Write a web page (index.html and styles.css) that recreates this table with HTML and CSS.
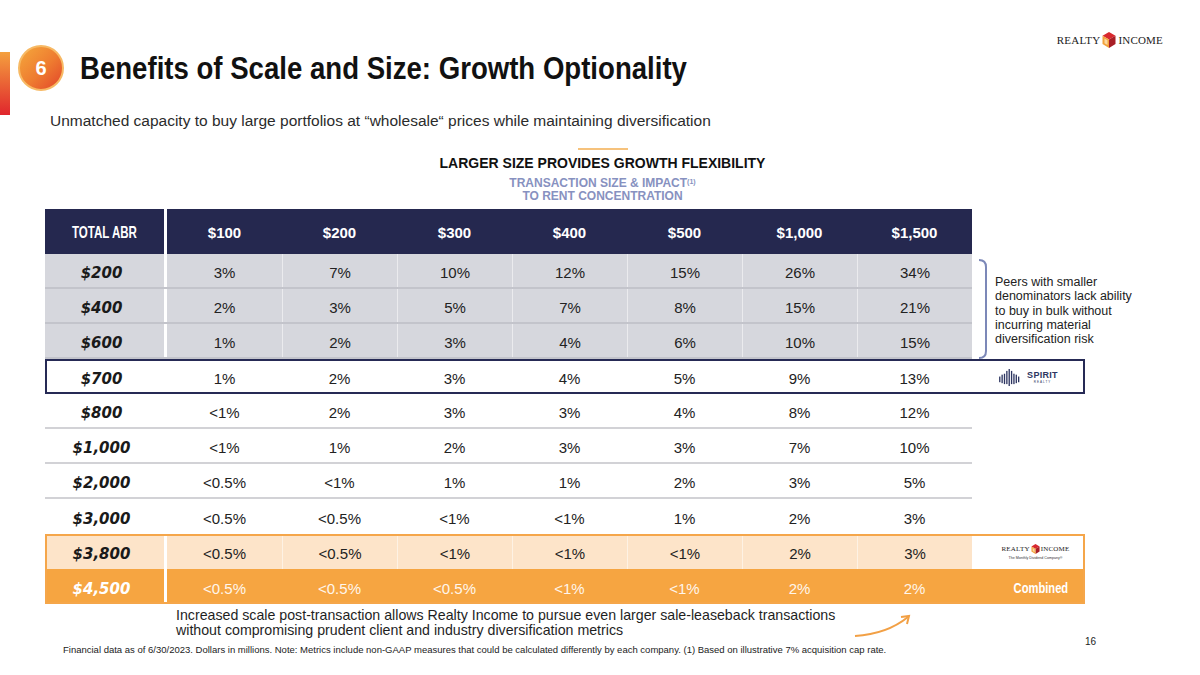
FILE: index.html
```html
<!DOCTYPE html>
<html lang="en">
<head>
<meta charset="utf-8">
<title>Benefits of Scale and Size</title>
<link rel="stylesheet" href="styles.css">
</head>
<body>
<div class="slide">
  <div class="topbar">
    <div class="ri-logo big">
      <span>REALTY</span>
      <svg class="cube" viewBox="0 0 14 16"><polygon points="7,0 13.5,3.8 7,7.6 0.5,3.8" fill="#d8282e"/><polygon points="13.5,3.8 13.5,12 7,16 7,7.6" fill="#a81e26"/><polygon points="0.5,3.8 7,7.6 7,16 0.5,12" fill="#f2a23c"/><polygon points="2.5,6.5 5.5,8.3 5.5,13 2.5,11.2" fill="#fbd9a0"/></svg>
      <span>INCOME</span>
    </div>
  </div>

  <div class="title-row">
    <div class="accent"></div>
    <div class="badge">6</div>
    <h1>Benefits of Scale and Size: Growth Optionality</h1>
  </div>

  <p class="subtitle">Unmatched capacity to buy large portfolios at “wholesale“ prices while maintaining diversification</p>

  <div class="section-head">
    <div class="rule"></div>
    <h2>LARGER SIZE PROVIDES GROWTH FLEXIBILITY</h2>
    <h3>TRANSACTION SIZE &amp; IMPACT<sup>(1)</sup><br>TO RENT CONCENTRATION</h3>
  </div>

  <div class="table">
    <div class="row head">
      <div class="cell label"><span class="cond">TOTAL ABR</span></div>
      <div class="cell">$100</div><div class="cell">$200</div><div class="cell">$300</div><div class="cell">$400</div><div class="cell">$500</div><div class="cell">$1,000</div><div class="cell">$1,500</div>
    </div>

    <div class="peers">
      <div class="rows">
        <div class="row gray">
          <div class="cell label">$200</div>
          <div class="cell">3%</div><div class="cell">7%</div><div class="cell">10%</div><div class="cell">12%</div><div class="cell">15%</div><div class="cell">26%</div><div class="cell">34%</div>
        </div>
        <div class="row gray">
          <div class="cell label">$400</div>
          <div class="cell">2%</div><div class="cell">3%</div><div class="cell">5%</div><div class="cell">7%</div><div class="cell">8%</div><div class="cell">15%</div><div class="cell">21%</div>
        </div>
        <div class="row gray">
          <div class="cell label">$600</div>
          <div class="cell">1%</div><div class="cell">2%</div><div class="cell">3%</div><div class="cell">4%</div><div class="cell">6%</div><div class="cell">10%</div><div class="cell">15%</div>
        </div>
      </div>
      <div class="note">
        <svg class="bracket" viewBox="0 0 12 100"><path d="M2,1 Q9,1 9,8 L9,92 Q9,99 2,99" fill="none" stroke="#7c88b8" stroke-width="2"/></svg>
        <p>Peers with smaller<br>denominators lack ability<br>to buy in bulk without<br>incurring material<br>diversification risk</p>
      </div>
    </div>

    <div class="row plain boxed spirit">
      <div class="cell label">$700</div>
      <div class="cell">1%</div><div class="cell">2%</div><div class="cell">3%</div><div class="cell">4%</div><div class="cell">5%</div><div class="cell">9%</div><div class="cell">13%</div>
      <div class="side">
        <div class="spirit-logo">
          <svg class="spirit-icon" viewBox="0 0 22 18">
            <g fill="#2d3561">
              <rect x="0" y="8" width="1.4" height="6"/>
              <rect x="2.5" y="6" width="1.4" height="9"/>
              <rect x="5" y="5" width="1.4" height="11"/>
              <rect x="7.5" y="2" width="1.4" height="14"/>
              <rect x="10" y="0" width="1.4" height="18"/>
              <rect x="12.5" y="2" width="1.4" height="14"/>
              <rect x="15" y="5" width="1.4" height="11"/>
              <rect x="17.5" y="6" width="1.4" height="9"/>
              <rect x="20" y="8" width="1.4" height="6"/>
            </g>
          </svg>
          <div class="spirit-text"><span class="s1">SPIRIT</span><span class="s2">REALTY</span></div>
        </div>
      </div>
    </div>

    <div class="row plain">
      <div class="cell label">$800</div>
      <div class="cell">&lt;1%</div><div class="cell">2%</div><div class="cell">3%</div><div class="cell">3%</div><div class="cell">4%</div><div class="cell">8%</div><div class="cell">12%</div>
    </div>
    <div class="row plain">
      <div class="cell label">$1,000</div>
      <div class="cell">&lt;1%</div><div class="cell">1%</div><div class="cell">2%</div><div class="cell">3%</div><div class="cell">3%</div><div class="cell">7%</div><div class="cell">10%</div>
    </div>
    <div class="row plain">
      <div class="cell label">$2,000</div>
      <div class="cell">&lt;0.5%</div><div class="cell">&lt;1%</div><div class="cell">1%</div><div class="cell">1%</div><div class="cell">2%</div><div class="cell">3%</div><div class="cell">5%</div>
    </div>
    <div class="row plain last">
      <div class="cell label">$3,000</div>
      <div class="cell">&lt;0.5%</div><div class="cell">&lt;0.5%</div><div class="cell">&lt;1%</div><div class="cell">&lt;1%</div><div class="cell">1%</div><div class="cell">2%</div><div class="cell">3%</div>
    </div>

    <div class="ri-box">
      <div class="row peach">
        <div class="cell label">$3,800</div>
        <div class="cell">&lt;0.5%</div><div class="cell">&lt;0.5%</div><div class="cell">&lt;1%</div><div class="cell">&lt;1%</div><div class="cell">&lt;1%</div><div class="cell">2%</div><div class="cell">3%</div>
        <div class="side white">
          <div class="ri-small">
            <div class="ri-logo small">
              <span>REALTY</span>
              <svg class="cube" viewBox="0 0 14 16"><polygon points="7,0 13.5,3.8 7,7.6 0.5,3.8" fill="#d8282e"/><polygon points="13.5,3.8 13.5,12 7,16 7,7.6" fill="#a81e26"/><polygon points="0.5,3.8 7,7.6 7,16 0.5,12" fill="#f2a23c"/><polygon points="2.5,6.5 5.5,8.3 5.5,13 2.5,11.2" fill="#fbd9a0"/></svg>
              <span>INCOME</span>
            </div>
            <div class="tagline">The Monthly Dividend Company®</div>
          </div>
        </div>
      </div>
      <div class="row orange">
        <div class="cell label">$4,500</div>
        <div class="cell">&lt;0.5%</div><div class="cell">&lt;0.5%</div><div class="cell">&lt;0.5%</div><div class="cell">&lt;1%</div><div class="cell">&lt;1%</div><div class="cell">2%</div><div class="cell">2%</div>
        <div class="side combined"><span class="cond">Combined</span></div>
      </div>
    </div>
  </div>

  <div class="bottom">
    <p class="callout">Increased scale post-transaction allows Realty Income to pursue even larger sale-leaseback transactions<br>without compromising prudent client and industry diversification metrics</p>
    <svg class="arrow" viewBox="0 0 60 26"><path d="M2,23 Q34,21 55,4" fill="none" stroke="#f2a045" stroke-width="2"/><path d="M48,4 L56,3 L54,11" fill="none" stroke="#f2a045" stroke-width="2"/></svg>
  </div>

  <div class="footer">
    <p class="footnote">Financial data as of 6/30/2023. Dollars in millions. Note: Metrics include non-GAAP measures that could be calculated differently by each company. (1) Based on illustrative 7% acquisition cap rate.</p>
    <span class="page">16</span>
  </div>
</div>
</body>
</html>
```

FILE: styles.css
```css
* { box-sizing: border-box; margin: 0; padding: 0; }
body { margin: 0; background: #fff; font-family: "Liberation Sans", Arial, sans-serif; color: #222; }
.slide { position: relative; width: 1200px; height: 675px; overflow: hidden; background: #fff; }

/* top logo */
.topbar { height: 45px; display: flex; justify-content: flex-end; align-items: flex-start; padding: 32px 37px 0 0; }
.ri-logo { display: flex; align-items: center; font-family: "Liberation Serif", "Times New Roman", serif; color: #1b1b1b; }
.ri-logo.big { font-size: 11px; letter-spacing: 0.2px; gap: 2px; }
.ri-logo.big .cube { width: 14px; height: 16px; }
.ri-logo.small { font-size: 7px; letter-spacing: 0.2px; gap: 1px; justify-content: center; }
.ri-logo.small .cube { width: 9px; height: 10px; }

/* title */
.title-row { height: 67px; display: flex; align-items: flex-start; }
.accent { width: 10px; height: 63px; margin-top: 7px; background: linear-gradient(#f4a03e, #e0262d); flex: none; }
.badge { width: 46px; height: 46px; margin-left: 8px; border-radius: 50%; flex: none;
  background: linear-gradient(135deg, #f5a83c 0%, #ee7b30 55%, #e2442a 100%);
  border: 2px solid #f7b964; display: flex; align-items: center; justify-content: center;
  color: #fff; font-weight: 700; font-size: 20px; }
h1 { margin-left: 16px; font-weight: 700; font-size: 32px; line-height: 46px; color: #111; white-space: nowrap;
  transform: scaleX(0.862); transform-origin: left center; }

.subtitle { margin-left: 50px; font-size: 15.5px; line-height: 18px; color: #2b2b2b; white-space: nowrap; }

/* section head */
.section-head { display: flex; flex-direction: column; align-items: center; padding-left: 5px; }
.rule { width: 50px; height: 2px; margin-top: 18px; background: #f6c27c; }
h2 { margin-top: 5px; font-size: 14px; line-height: 16px; font-weight: 700; color: #111; }
h3 { margin-top: 6px; font-size: 12px; line-height: 13px; font-weight: 700; color: #8791c0; text-align: center; }
h3 sup { font-size: 7px; vertical-align: top; position: relative; top: -2px; }

/* table */
.table { margin-left: 45px; margin-top: 6px; width: 1040px; }
.row { display: flex; height: 35px; width: 927px; }
.cell { width: 115px; flex: none; display: flex; align-items: center; justify-content: center; font-size: 15px; padding-top: 4px; color: #222; }
.cell.label { width: 122px; border-right: 3px solid #fff; padding-right: 6px;
  font-family: "DejaVu Sans", sans-serif; font-weight: 700; font-style: italic; font-size: 15px; color: #1a1a1a; }
.cond { display: inline-block; font-family: "Liberation Sans", Arial, sans-serif; font-style: normal; font-weight: 700; white-space: nowrap; transform: scaleX(0.76); }

.row.head { height: 45px; background: #25284f; }
.row.head .cell { color: #fff; font-weight: 700; padding-top: 2px; }
.row.head .cell.label { color: #fff; padding-right: 0; font-size: 16.5px; }
.row.head .cell.label .cond { transform: scaleX(0.7); }

.peers { display: flex; }
.rows { width: 927px; flex: none; }
.row.gray { background: #d6d7dd; border-bottom: 2px solid #c3c4cb; }
.row.gray .cell + .cell + .cell, .row.peach .cell + .cell + .cell { border-left: 1px solid rgba(255,255,255,0.5); }
.note { display: flex; align-items: flex-start; flex: none; width: 170px; }
.bracket { width: 12px; height: 100px; margin: 5px 0 0 5px; flex: none; }
.note p { margin: 21px 0 0 6px; font-size: 12.5px; line-height: 14.25px; color: #222; white-space: nowrap; }

.row.plain { border-bottom: 2px solid #d2d2d6; }
.row.plain.last { border-bottom: none; }
.row.boxed { width: 1040px; border-bottom: none; outline: 2px solid #262a55; outline-offset: -2px; }
.side { width: 113px; flex: none; display: flex; align-items: center; justify-content: center; }

.spirit-logo { display: flex; align-items: center; gap: 7px; padding-top: 2px; }
.spirit-icon { width: 21px; height: 17px; }
.spirit-text { display: flex; flex-direction: column; align-items: center; color: #2d3561; }
.spirit-text .s1 { font-size: 9px; font-weight: 700; letter-spacing: 0.3px; line-height: 9px; }
.spirit-text .s2 { font-size: 3px; letter-spacing: 1px; line-height: 5px; }

.ri-box { width: 1040px; outline: 2px solid #f5a64a; outline-offset: -2px; }
.ri-box .row { width: 1040px; }
.row.peach { background: #fde4c9; }
.side.white { background: #fff; align-self: stretch; padding-left: 14px; }
.ri-small { display: flex; flex-direction: column; align-items: center; }
.tagline { font-size: 3.6px; color: #333; margin-top: 2px; }
.row.orange { background: #f6a541; }
.row.orange .cell { color: #fff6ec; }
.row.orange .cell.label { color: #fff; }
.side.combined { color: #fff; font-size: 15.5px; padding: 2px 0 0 24px; }
.side.combined .cond { transform: scaleX(0.72); }

/* bottom */
.bottom { display: flex; align-items: flex-start; padding-left: 176px; margin-top: 4px; }
.callout { font-size: 14.2px; line-height: 15px; color: #1f1f1f; white-space: nowrap; }
.arrow { width: 60px; height: 26px; margin: 5px 0 0 18px; flex: none; }

.footer { display: flex; align-items: flex-start; padding-left: 63px; }
.footnote { margin-top: 5px; font-size: 9.5px; line-height: 11px; color: #222; white-space: nowrap; }
.page { margin-left: auto; margin-right: 104px; font-size: 10px; line-height: 12px; color: #222; margin-top: -3px; }
```
